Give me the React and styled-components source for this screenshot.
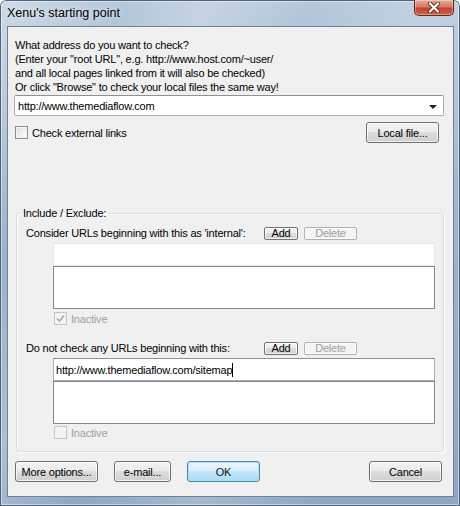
import React from 'react'
import styled, { createGlobalStyle } from 'styled-components'

const GlobalStyle = createGlobalStyle`
  html, body {
    margin: 0;
    padding: 0;
    background: #ffffff;
  }
  body {
    font-family: "Liberation Sans", Arial, sans-serif;
    font-size: 11px;
    letter-spacing: -0.2px;
    color: #000;
  }
`

const Window = styled.div`
  width: 460px;
  height: 506px;
  box-sizing: border-box;
  display: flex;
  flex-direction: column;
  padding: 0 6px 9px 7px;
  border-radius: 6px 6px 0 0;
  background:
    linear-gradient(115deg, rgba(255,255,255,0.35) 0%, rgba(255,255,255,0) 18%, rgba(255,255,255,0.25) 30%, rgba(255,255,255,0) 45%, rgba(255,255,255,0.2) 62%, rgba(255,255,255,0) 80%),
    linear-gradient(180deg, #b4c7db 0%, #9fb5cd 40%, #8fa7c2 100%);
  box-shadow: inset 0 0 0 1px #4f6379, inset 0 0 0 2px rgba(255,255,255,0.45);
`

const TitleBar = styled.div`
  height: 26px;
  flex: none;
  display: flex;
  align-items: flex-start;
  justify-content: space-between;
`

const Title = styled.span`
  font-family: "Liberation Sans", Arial, sans-serif;
  font-size: 12.5px;
  letter-spacing: 0;
  color: #000;
  margin-top: 6px;
  text-shadow: 0 0 6px rgba(255,255,255,0.9);
`

const CloseButton = styled.div`
  width: 40px;
  height: 16px;
  box-sizing: border-box;
  border: 1px solid #5b2a25;
  border-top: none;
  border-radius: 0 0 5px 5px;
  background: linear-gradient(180deg, #e8a898 0%, #d47a66 45%, #c2442c 55%, #d35f45 100%);
  box-shadow: inset 0 0 0 1px rgba(255,255,255,0.35);
  display: flex;
  align-items: center;
  justify-content: center;
`

const Client = styled.div`
  flex: 1;
  background: #f0f0f0;
  border: 1px solid #6f8196;
  padding: 11px 0 0 6px;
  display: flex;
  flex-direction: column;
  align-items: flex-start;
`

const Intro = styled.div`
  line-height: 14px;
  padding-left: 1px;
  white-space: nowrap;
`

const Combo = styled.div`
  width: 430px;
  height: 21px;
  box-sizing: border-box;
  margin-top: 1px;
  background: #fff;
  border: 1px solid #abadb3;
  border-top-color: #8e9196;
  border-radius: 2px;
  display: flex;
  align-items: center;
  justify-content: space-between;
  padding: 0 6px 0 3px;
`

const ComboArrow = styled.span`
  width: 0;
  height: 0;
  border-left: 4px solid transparent;
  border-right: 4px solid transparent;
  border-top: 4px solid #222;
  margin-top: 2px;
`

const CheckRow = styled.div`
  width: 425px;
  margin-top: 6px;
  display: flex;
  align-items: center;
  justify-content: space-between;
`

const CheckLabel = styled.label`
  display: flex;
  align-items: center;
  gap: 4px;
  margin-left: ${p => p.$indent || 1}px;
  margin-top: ${p => p.$top || 0}px;
  color: ${p => (p.$disabled ? '#a0a0a0' : '#000')};
  height: 13px;
`

const Box = styled.span`
  width: 13px;
  height: 13px;
  box-sizing: border-box;
  border: 1px solid ${p => (p.$disabled ? '#c4c4c4' : '#8e8f8f')};
  background: ${p => (p.$disabled ? '#f4f4f4' : 'linear-gradient(135deg, #dcdcdc 0%, #ffffff 100%)')};
  box-shadow: inset 0 0 0 1px #f4f4f4;
  display: flex;
  align-items: center;
  justify-content: center;
`

const Button = styled.button`
  font-family: "Liberation Sans", Arial, sans-serif;
  font-size: 11px;
  letter-spacing: -0.2px;
  color: #000;
  width: ${p => p.$w}px;
  height: 21px;
  padding: 0;
  margin: 0;
  box-sizing: border-box;
  border: 1px solid #707070;
  border-radius: 3px;
  background: linear-gradient(180deg, #f2f2f2 0%, #ebebeb 49%, #dddddd 50%, #cfcfcf 100%);
  box-shadow: inset 0 0 0 1px rgba(255,255,255,0.7);
  display: flex;
  align-items: center;
  justify-content: center;
`

const DefaultButton = styled(Button)`
  border-color: #3c7fb1;
  background: linear-gradient(180deg, #eaf6fd 0%, #d9f0fc 49%, #bee6fd 50%, #a7d9f5 100%);
  box-shadow: inset 0 0 0 1px #a7e0f7;
  opacity: 0.92;
`

const SmallButton = styled(Button)`
  height: 13px;
  border-radius: 2px;
  border-color: ${p => (p.disabled ? '#adb2b5' : '#707070')};
  color: ${p => (p.disabled ? '#a0a0a0' : '#000')};
  background: ${p => (p.disabled ? '#f4f4f4' : 'linear-gradient(180deg, #f2f2f2 0%, #ebebeb 49%, #dddddd 50%, #cfcfcf 100%)')};
`

const Group = styled.fieldset`
  width: 428px;
  box-sizing: border-box;
  margin: 64px 0 0 2px;
  padding: 0 0 12px 0;
  border: 1px solid #d5dfe5;
  border-radius: 3px;
  box-shadow: inset 1px 1px 0 #fff, 1px 1px 0 #fff;
`

const Legend = styled.legend`
  padding: 0 2px;
  margin-left: 4px;
  line-height: 13px;
`

const RuleRow = styled.div`
  display: flex;
  align-items: center;
  padding-left: 9px;
  margin-top: ${p => p.$top}px;
  height: 14px;
`

const RuleLabel = styled.span`
  width: 238px;
  white-space: nowrap;
`

const ButtonPair = styled.div`
  display: flex;
  gap: 6px;
`

const Indent = styled.div`
  margin-left: 36px;
  display: flex;
  flex-direction: column;
`

const TextBox = styled.div`
  width: 382px;
  height: 23px;
  box-sizing: border-box;
  margin-top: 3px;
  background: #fff;
  border: 1px solid ${p => (p.$active ? '#abadb3' : '#e3e9ef')};
  border-top-color: ${p => (p.$active ? '#8e9196' : '#dde3e9')};
  display: flex;
  align-items: center;
  padding-left: 2px;
  white-space: nowrap;
`

const Caret = styled.span`
  display: inline-block;
  width: 1px;
  height: 14px;
  background: #000;
`

const ListBox = styled.div`
  width: 382px;
  height: 43px;
  box-sizing: border-box;
  background: #fff;
  border: 1px solid #828790;
`

const Footer = styled.div`
  width: 427px;
  margin: 9px 0 0 1px;
  display: flex;
  align-items: center;
  gap: 16px;
`

const Spacer = styled.div`
  flex: 1;
`

function Check({ checked, disabled, children, indent, top }) {
  return (
    <CheckLabel $disabled={disabled} $indent={indent} $top={top}>
      <Box $disabled={disabled}>
        {checked && (
          <svg width="9" height="9" viewBox="0 0 9 9">
            <path d="M1 4.5 L3.5 7 L8 1.5" fill="none" stroke={disabled ? '#a8a8a8' : '#222'} strokeWidth="1.6" />
          </svg>
        )}
      </Box>
      {children}
    </CheckLabel>
  )
}

function RuleBlock({ label, value, top }) {
  return (
    <>
      <RuleRow $top={top}>
        <RuleLabel>{label}</RuleLabel>
        <ButtonPair>
          <SmallButton $w={34}>Add</SmallButton>
          <SmallButton $w={53} disabled>Delete</SmallButton>
        </ButtonPair>
      </RuleRow>
      <Indent>
        <TextBox $active={!!value}>
          {value}
          {value && <Caret />}
        </TextBox>
        <ListBox />
      </Indent>
    </>
  )
}

export default function App() {
  return (
    <>
      <GlobalStyle />
      <Window>
        <TitleBar>
          <Title>Xenu's starting point</Title>
          <CloseButton>
            <svg width="14" height="11" viewBox="0 0 14 11">
              <path d="M3 1.5 L11 9.5 M11 1.5 L3 9.5" stroke="#6a2a20" strokeWidth="4" strokeLinecap="round" />
              <path d="M3 1.5 L11 9.5 M11 1.5 L3 9.5" stroke="#ffffff" strokeWidth="2.2" strokeLinecap="round" />
            </svg>
          </CloseButton>
        </TitleBar>
        <Client>
          <Intro>
            What address do you want to check?<br />
            (Enter your "root URL", e.g. http://www.host.com/~user/<br />
            and all local pages linked from it will also be checked)<br />
            Or click "Browse" to check your local files the same way!
          </Intro>
          <Combo>
            <span>http://www.themediaflow.com</span>
            <ComboArrow />
          </Combo>
          <CheckRow>
            <Check>Check external links</Check>
            <Button $w={73}>Local file...</Button>
          </CheckRow>
          <Group>
            <Legend>Include / Exclude:</Legend>
            <RuleBlock top={6} label="Consider URLs beginning with this as 'internal':" />
            <Check checked disabled indent={37} top={3}>Inactive</Check>
            <RuleBlock top={16} label="Do not check any URLs beginning with this:" value="http://www.themediaflow.com/sitemap" />
            <Check disabled indent={37} top={2}>Inactive</Check>
          </Group>
          <Footer>
            <Button $w={83}>More options...</Button>
            <Button $w={57}>e-mail...</Button>
            <DefaultButton $w={73}>OK</DefaultButton>
            <Spacer />
            <Button $w={73}>Cancel</Button>
          </Footer>
        </Client>
      </Window>
    </>
  )
}
